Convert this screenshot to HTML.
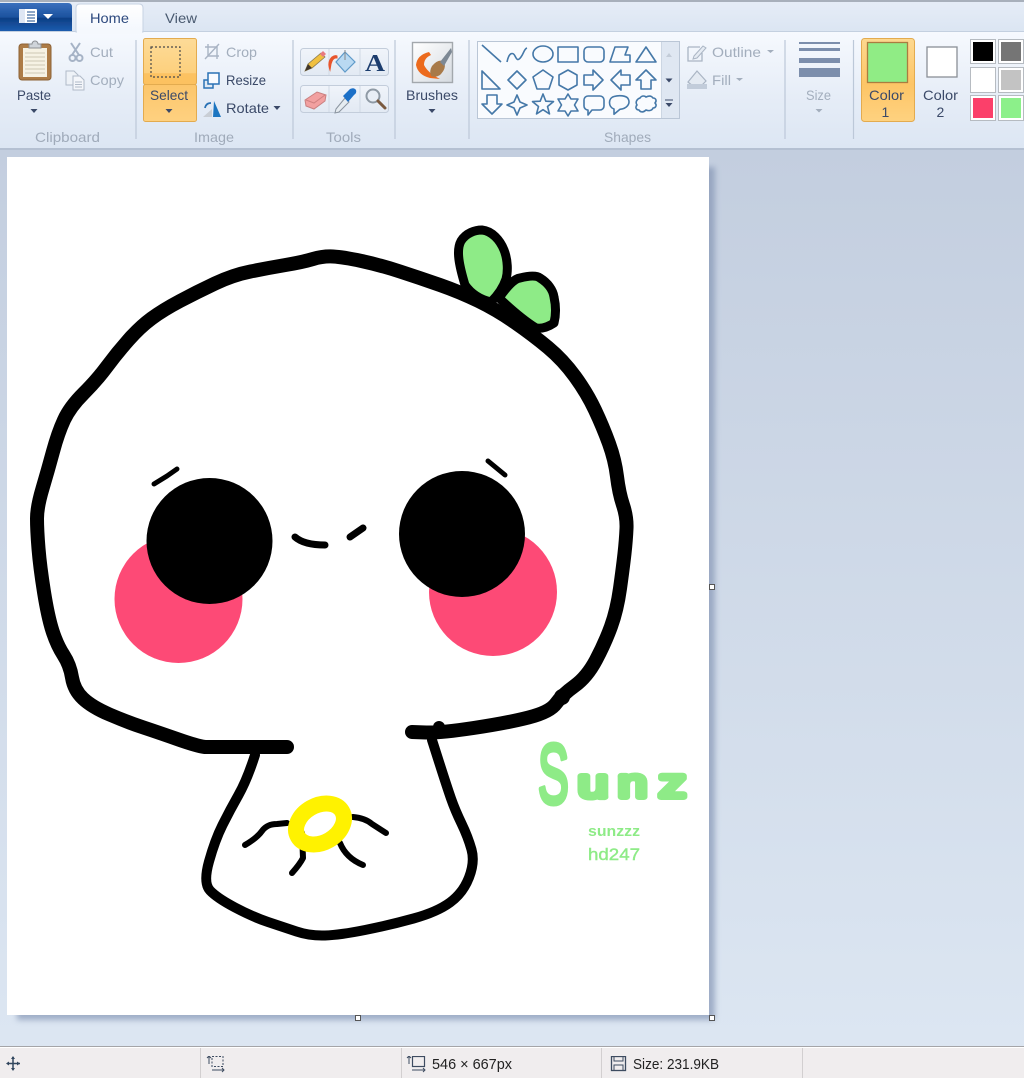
<!DOCTYPE html>
<html><head><meta charset="utf-8"><title>Paint</title>
<style>
html,body{margin:0;padding:0;width:1024px;height:1078px;overflow:hidden;background:#dce6f2}
svg{display:block}
text{font-family:"Liberation Sans",sans-serif}
.d{font-size:14px;fill:#3a4a68}
.g{font-size:14px;fill:#a3aebd}
.l{font-size:14px;fill:#a0abba}
.s{font-size:15px;fill:#222}
.sh{fill:none;stroke:#4478a8;stroke-width:1.6;stroke-linejoin:round}
</style></head><body>
<svg width="1024" height="1078" viewBox="0 0 1024 1078" xmlns="http://www.w3.org/2000/svg">
<defs>
<linearGradient id="bg" x1="0" y1="0" x2="0" y2="1"><stop offset="0" stop-color="#c3cedf"/><stop offset="1" stop-color="#dce6f2"/></linearGradient>
<linearGradient id="rib" x1="0" y1="0" x2="0" y2="1"><stop offset="0" stop-color="#f6f9fe"/><stop offset=".55" stop-color="#e6edf7"/><stop offset="1" stop-color="#dce6f3"/></linearGradient>
<linearGradient id="tab" x1="0" y1="0" x2="0" y2="1"><stop offset="0" stop-color="#e6edf7"/><stop offset="1" stop-color="#dbe5f2"/></linearGradient>
<linearGradient id="home" x1="0" y1="0" x2="0" y2="1"><stop offset="0" stop-color="#ffffff"/><stop offset="1" stop-color="#f3f7fd"/></linearGradient>
<linearGradient id="app" x1="0" y1="0" x2="0" y2="1"><stop offset="0" stop-color="#3a70bd"/><stop offset=".5" stop-color="#1c529f"/><stop offset=".55" stop-color="#0e3f85"/><stop offset="1" stop-color="#1c5cae"/></linearGradient>
<linearGradient id="or1" x1="0" y1="0" x2="0" y2="1"><stop offset="0" stop-color="#fddb98"/><stop offset=".75" stop-color="#fdd07d"/><stop offset=".76" stop-color="#fcc262"/><stop offset="1" stop-color="#fcc160"/></linearGradient>
<linearGradient id="or2" x1="0" y1="0" x2="0" y2="1"><stop offset="0" stop-color="#fcc66c"/><stop offset="1" stop-color="#fed180"/></linearGradient>
<linearGradient id="or3" x1="0" y1="0" x2="0" y2="1"><stop offset="0" stop-color="#fdd88f"/><stop offset=".55" stop-color="#fdc566"/><stop offset="1" stop-color="#fed280"/></linearGradient>
<linearGradient id="tool" x1="0" y1="0" x2="0" y2="1"><stop offset="0" stop-color="#f0f4fa"/><stop offset="1" stop-color="#e2e9f3"/></linearGradient>
<linearGradient id="brush" x1="0" y1="0" x2="1" y2="1"><stop offset="0" stop-color="#ffffff"/><stop offset="1" stop-color="#d5dae0"/></linearGradient>
<filter id="bl" x="-5%" y="-5%" width="110%" height="110%"><feGaussianBlur stdDeviation="3"/></filter>
<filter id="soft" x="0" y="0" width="100%" height="100%"><feGaussianBlur stdDeviation="0.35"/></filter>
</defs>

<!-- canvas background -->
<rect x="0" y="150" width="1024" height="896" fill="url(#bg)"/>
<rect x="17" y="167" width="698" height="853" fill="#7f90b0" opacity=".65" filter="url(#bl)"/>
<rect x="7" y="157" width="702" height="858" fill="#fff"/>

<!-- drawing -->
<circle cx="178.500" cy="599" r="64" fill="#fd4a76"/>
<circle cx="493" cy="592" r="64" fill="#fd4a76"/>
<circle cx="209.500" cy="541" r="63" fill="#000"/>
<circle cx="462" cy="534" r="63" fill="#000"/>
<g fill="none" stroke="#000" stroke-linecap="round" stroke-linejoin="round">
<path stroke-width="14" d="M287,747L205,747Q197,746 178.500,739.500T143.500,727.500T109.500,714.500T83,698.500T72,677.500T63.500,655T52.500,631T44,592T38.500,548.500T37,518.500T42.500,488.500T53,451.500T64,420T83.500,393.500T107,366.500T128.500,340T151.500,318.500T180,301T215,283.500T250.500,271.500T285.500,265T313,259T333,256.500T361.500,261T400,271.500T440,285T478.500,301T515,322.500T548,347.500T575,376.500T595,410T609,443.500T617,476.500T623,505T626.500,528.500T624.500,553.500T620,588.500T611,626.500T596,660T574.500,686T556,703.500T528.500,717.500T473.500,728T426,732.500L412,732"/>
<path stroke-width="10" d="M255,755Q247,780 238.500,795T222.500,825T209,861.500T210,890.500T235,907.500T268,922T296.500,931.500T325,935.500T365,930T413.500,918.500T450,902.500T469,877.500T471.500,849.500T461.500,823.500T451,798.500T439.500,763.500L432,740"/>
<path stroke-width="6" d="M245,845Q257,838 262,831T277,824L287,823"/>
<path stroke-width="6" d="M353,817Q365,818 372,824L386,833"/>
<path stroke-width="6" d="M302,833L303,858Q300,864 292,873"/>
<path stroke-width="6" d="M340,843Q346,858 363,865"/>
<path stroke-width="5" d="M154,484L167,476 177,469"/>
<path stroke-width="5" d="M488,461L505,475"/>
<path stroke-width="7" d="M295,537Q304,545 325,545"/>
<path stroke-width="7" d="M350,537L363,528"/>
</g>
<circle cx="439" cy="727" r="6" fill="#000"/>
<circle cx="562" cy="697" r="8" fill="#000"/>
<ellipse cx="320" cy="824" rx="25.500" ry="18.500" transform="rotate(-30 320 824)" fill="none" stroke="#fff200" stroke-width="16"/>
<path d="M465,285C459,265 456,250 461,241C466,233 475,230 482,230C492,231 500,240 504,250C508,260 508,272 506,279C503,288 497,296 491,302C482,300 472,295 465,285Z" fill="#8eeb87" stroke="#000" stroke-width="9" stroke-linejoin="round"/>
<path d="M499,298C506,288 513,279 520,278C528,276 536,275 540,278C548,283 553,290 554,297C556,306 556,315 554,323C548,327 542,329 536,328C528,323 518,316 499,298Z" fill="#8eeb87" stroke="#000" stroke-width="9" stroke-linejoin="round"/>
<g fill="#8eeb87" stroke="#8eeb87" stroke-linejoin="round" stroke-linecap="round">
<text transform="translate(538,803) scale(.55,1)" stroke-width="5" style="font-size:84px">S</text>
<text x="578" y="797" style="font-size:40px" stroke-width="6" textLength="30" lengthAdjust="spacingAndGlyphs">u</text>
<text x="618" y="797" style="font-size:40px" stroke-width="6" textLength="29" lengthAdjust="spacingAndGlyphs">n</text>
<text x="659" y="797" style="font-size:40px" stroke-width="6" textLength="27" lengthAdjust="spacingAndGlyphs">z</text>
</g>
<text x="588" y="836" textLength="52" lengthAdjust="spacingAndGlyphs" style="font-size:15px;font-weight:bold" fill="#8eeb87">sunzzz</text>
<text x="588" y="860" textLength="52" lengthAdjust="spacingAndGlyphs" style="font-size:17px" fill="#8eeb87" stroke="#8eeb87" stroke-width=".4">hd247</text>

<!-- handles -->
<g fill="#fff" stroke="#555" stroke-width="1">
<rect x="709.500" y="584.500" width="5" height="5"/>
<rect x="355.500" y="1015.500" width="5" height="5"/>
<rect x="709.500" y="1015.500" width="5" height="5"/>
</g>

<!-- ribbon -->
<g filter="url(#soft)">
<rect x="0" y="0" width="1024" height="32" fill="url(#tab)"/>
<rect x="0" y="0" width="1024" height="2" fill="#a8b0bb"/>
<rect x="0" y="32" width="1024" height="116" fill="url(#rib)"/>
<rect x="0" y="148" width="1024" height="2" fill="#b4c0d2"/>
<line x1="0" y1="31.500" x2="1024" y2="31.500" stroke="#c4d0e0"/>
<path d="M0,3H68Q72,3 72,7V31H0Z" fill="url(#app)"/>
<rect x="19" y="9" width="18" height="14" fill="#fff" rx="1"/>
<rect x="19" y="9" width="6" height="14" fill="#dfe7f4"/>
<path d="M27,12h8M27,15h8M27,18h8M27,21h8" stroke="#1f4f8f" stroke-width="1"/>
<path d="M43,14h10l-5,5z" fill="#fff"/>
<path d="M76,32V8Q76,4 80,4H139Q143,4 143,8V32Z" fill="url(#home)" stroke="#c7d3e3"/>
<rect x="77" y="30" width="65" height="4" fill="#f5f8fd"/>
<text x="90" y="23" textLength="39" lengthAdjust="spacingAndGlyphs" style="font-size:14px" fill="#2d4a7e">Home</text>
<text x="165" y="23" textLength="32" lengthAdjust="spacingAndGlyphs" style="font-size:14px" fill="#4a5a70">View</text>

<!-- separators -->
<g stroke="#bcc8d8" stroke-width="1.200">
<line x1="136" y1="40" x2="136" y2="139"/><line x1="293" y1="40" x2="293" y2="139"/>
<line x1="395" y1="40" x2="395" y2="139"/><line x1="469" y1="40" x2="469" y2="139"/>
<line x1="785" y1="40" x2="785" y2="139"/><line x1="853.500" y1="40" x2="853.500" y2="139"/>
</g>

<!-- clipboard -->
<rect x="19" y="44" width="32" height="36" rx="3" fill="#ad7b47" stroke="#8d6236"/>
<rect x="23" y="48" width="24" height="29" fill="#f6f2e4"/>
<path d="M25,53h20M25,57h20M25,61h20M25,65h20M25,69h20M25,73h20" stroke="#cfc8b4" stroke-width="1"/>
<path d="M29,48V44h3a3,3 0 0 1 6,0h3v4z" fill="#cfd4da" stroke="#8c8f93"/>
<text x="17" y="100" textLength="34" lengthAdjust="spacingAndGlyphs" class="d">Paste</text>
<path d="M30.500,109h7l-3.500,4z" fill="#3a4a68"/>
<g stroke="#a6b3c6" fill="none" stroke-width="2"><path d="M71,43L79,55M80,43L72,55"/><circle cx="72.500" cy="58" r="3"/><circle cx="79.500" cy="58" r="3"/></g>
<g fill="#eef2f7" stroke="#b0bac8"><path d="M66,71h8l4,4v10H66z"/><path d="M73,76h7l4,4v10H73z" fill="#f4f6fa"/></g>
<path d="M75,82h7M75,84.500h7M75,87h7" stroke="#b0bac8"/>
<text x="90" y="57" textLength="23" lengthAdjust="spacingAndGlyphs" class="g">Cut</text>
<text x="90" y="85" textLength="34" lengthAdjust="spacingAndGlyphs" class="g">Copy</text>
<text x="35" y="142" textLength="65" lengthAdjust="spacingAndGlyphs" class="l">Clipboard</text>

<!-- select -->
<rect x="143.500" y="38.500" width="53" height="46" rx="2" fill="url(#or1)" stroke="#e3ab50"/>
<rect x="143.500" y="84.500" width="53" height="37" rx="2" fill="url(#or2)" stroke="#e3ab50"/>
<rect x="151" y="47" width="29" height="30" fill="none" stroke="#4a4a4a" stroke-width="1.200" stroke-dasharray="2 2"/>
<text x="150" y="100" textLength="38" lengthAdjust="spacingAndGlyphs" class="d">Select</text>
<path d="M165.500,109h7l-3.500,4z" fill="#3a4a68"/>

<!-- image -->
<g fill="none" stroke="#a9b4c4" stroke-width="1.400"><path d="M208,44v12h11M205,47h12v12"/><path d="M205,59L219,44"/></g>
<g fill="#fff" stroke="#2a72b5" stroke-width="1.500"><rect x="204" y="80" width="9" height="8" fill="#dfe8f3"/><rect x="208" y="73" width="11" height="11" fill="#f8fbff"/></g>
<path d="M214,101l7,16h-8z" fill="#1f74c0"/><path d="M203,117l9,-8v8z" fill="#c9ced5"/>
<path d="M205,108q1,-5 6,-5" fill="none" stroke="#2a72b5" stroke-width="1.800"/>
<text x="226" y="57" textLength="31" lengthAdjust="spacingAndGlyphs" class="g">Crop</text>
<text x="226" y="85" textLength="40" lengthAdjust="spacingAndGlyphs" class="d">Resize</text>
<text x="226" y="113" textLength="43" lengthAdjust="spacingAndGlyphs" class="d">Rotate</text>
<path d="M273.500,106h7l-3.500,4z" fill="#3a4a68"/>
<text x="194" y="142" textLength="40" lengthAdjust="spacingAndGlyphs" class="l">Image</text>

<!-- tools -->
<rect x="300.500" y="48.500" width="88" height="27" rx="3" fill="url(#tool)" stroke="#c3cddb"/>
<rect x="300.500" y="85.500" width="88" height="27" rx="3" fill="url(#tool)" stroke="#c3cddb"/>
<path d="M329,49v26M360,49v26M329,86v26M360,86v26" stroke="#d0d9e5"/>
<path d="M305,71l3,-7 13,-11 4,4 -13,11z" fill="#f0c040" stroke="#8a7a50" stroke-width=".8"/>
<path d="M320,54l3,-3 3,3 -3,3z" fill="#e87a80"/><path d="M305,71l3,-7 4,4z" fill="#40362c"/>
<path d="M345,52l10,10 -10,10 -9,-10z" fill="#b9d9f2" stroke="#5f9ac9" stroke-width="1.200"/>
<path d="M345,50l0,10" stroke="#888" stroke-width="1"/>
<path d="M337,58q-4,-1 -6,6l-1,6q-3,-8 2,-13q3,-2 5,-1z" fill="#e8552d" stroke="#e8552d"/>
<text x="365" y="71" textLength="20" lengthAdjust="spacingAndGlyphs" style="font-family:'Liberation Serif',serif;font-size:24px;font-weight:bold" fill="#1f3d6e">A</text>
<path d="M305,100l12,-8 9,3 -1,6 -11,8 -8,-3z" fill="#f2a0a0" stroke="#c98080"/>
<path d="M306,100l8,3 11,-8" fill="none" stroke="#d08080"/>
<path d="M336,109l9,-11 4,4 -10,10 -4,1z" fill="#e6ecf1" stroke="#8b95a0"/>
<path d="M343,96l7,-7q4,-2 6,1q1,3 -2,5l-6,7z" fill="#1f6fc7"/>
<circle cx="373" cy="96" r="6.500" fill="#e8eef6" stroke="#8f9aa5" stroke-width="2"/>
<path d="M378,101l7,7" stroke="#7a5a3f" stroke-width="3" stroke-linecap="round"/>
<text x="326" y="142" textLength="35" lengthAdjust="spacingAndGlyphs" class="l">Tools</text>

<!-- brushes -->
<rect x="412.500" y="42.500" width="40" height="40" fill="url(#brush)" stroke="#a3a8ad" stroke-width="1.400"/>
<path d="M429,52q-12,3 -13,13q2,10 14,13l10,1q-12,-6 -16,-14q0,-7 7,-10z" fill="#ec6a1f"/>
<path d="M432,66q7,-8 12,-4q3,6 -4,13q-5,3 -9,1q-2,-5 1,-10z" fill="#a87a4a"/>
<path d="M440,62l11,-14 1,4 -8,14z" fill="#7d8894"/>
<text x="406" y="100" textLength="52" lengthAdjust="spacingAndGlyphs" class="d">Brushes</text>
<path d="M428.500,109h7l-3.500,4z" fill="#3a4a68"/>

<!-- shapes gallery -->
<rect x="477.500" y="41.500" width="202" height="77" fill="#f9fbfe" stroke="#bac6d6"/>
<rect x="661" y="42" width="18" height="76" fill="#dfe7f2"/>
<line x1="661.500" y1="42" x2="661.500" y2="118" stroke="#ccd6e3"/>
<path d="M666,57h6l-3,-4z" fill="#c3ccd8"/><path d="M665.500,78.500h7l-3.500,4z" fill="#3a4a68"/>
<path d="M665,100h8" stroke="#3a4a68"/><path d="M665.500,103h7l-3.500,4z" fill="#3a4a68"/>
<g class="sh">
<path class="sh" d="M482,45L501,62"/>
<path class="sh" d="M507,62c2,-10 6,-10 8,-6s3,5 6,1 3,-8 6,-9"/>
<ellipse class="sh" cx="543" cy="54" rx="10" ry="8"/>
<rect class="sh" x="558" y="47" width="20" height="15"/>
<rect class="sh" x="584" y="47" width="20" height="15" rx="4"/>
<path class="sh" d="M610,62L615,47H628L625,55H630V62Z"/>
<path class="sh" d="M646,47L656,62H636Z"/>
<path class="sh" d="M482,71V89H500Z"/>
<path class="sh" d="M517,71L526,80 517,89 508,80Z"/>
<path class="sh" d="M543,70L553,77 549,89 537,89 533,77Z"/>
<path class="sh" d="M568,70L577,75V85L568,90 559,85V75Z"/>
<path class="sh" d="M584,75h9v-5l10,10 -10,10v-5h-9z"/>
<path class="sh" d="M630,75h-9v-5l-10,10 10,10v-5h9z"/>
<path class="sh" d="M646,70l10,10h-5v9h-10v-9h-5z"/>
<path class="sh" d="M487,95h10v9h5l-10,10 -10,-10h5z"/>
<path class="sh" d="M517,95l3,7 7,3 -7,3 -3,7 -3,-7 -7,-3 7,-3z"/>
<path class="sh" d="M543,94L545.800,101.200 553.500,101.600 547.500,106.500 549.500,113.900 543,109.700 536.500,113.900 538.500,106.500 532.500,101.600 540.200,101.200Z"/>
<path class="sh" d="M568,94L571,99H578L574.500,105 578,111H571L568,116 565,111H558L561.500,105 558,99H565Z"/>
<path class="sh" d="M588,96h12a4,4 0 0 1 4,4v6a4,4 0 0 1 -4,4h-8l-4,5v-5a4,4 0 0 1 -4,-4v-6a4,4 0 0 1 4,-4z"/>
<path class="sh" d="M614,109c-6,-2 -6,-11 0,-12.500 5,-1.500 12,-1 14,2 3,5 -1,10 -8,10.800l-6,5z"/>
<path class="sh" d="M640,98c2,-3 5,-2 6,-1 2,-1 5,-2 7,1 3,0 4,3 2,5 2,2 1,5 -2,5 -1,3 -5,3 -7,2 -3,3 -6,2 -7,0 -3,0 -4,-3 -2,-5 -2,-3 0,-6 3,-7z"/>
</g>
<text x="604" y="142" textLength="47" lengthAdjust="spacingAndGlyphs" class="l">Shapes</text>

<!-- outline/fill -->
<path d="M688,47h12M688,47v14h14v-8" fill="none" stroke="#aab5c4" stroke-width="1.300"/>
<path d="M694,56l9,-10 3,2 -9,10 -4,1z" fill="#e5ebf3" stroke="#aab5c4"/>
<text x="712" y="57" textLength="49" lengthAdjust="spacingAndGlyphs" class="g">Outline</text>
<path d="M767,50h7l-3.500,3z" fill="#a3aebd"/>
<path d="M688,82l9,-11 9,10 -6,6h-6z" fill="#e4eaf2" stroke="#aab5c4" stroke-width="1.200"/>
<rect x="687" y="84" width="20" height="5" fill="#c2ccda"/>
<text x="712" y="85" textLength="19" lengthAdjust="spacingAndGlyphs" class="g">Fill</text>
<path d="M736,78h7l-3.500,3z" fill="#a3aebd"/>

<!-- size -->
<g fill="#7c8eac"><rect x="799" y="42" width="41" height="2"/><rect x="799" y="48" width="41" height="3"/><rect x="799" y="58" width="41" height="5"/><rect x="799" y="68" width="41" height="9"/></g>
<text x="806" y="100" textLength="25" lengthAdjust="spacingAndGlyphs" class="g">Size</text>
<path d="M815.500,109h7l-3.500,3.500z" fill="#a3aebd"/>

<!-- colors -->
<rect x="861.500" y="38.500" width="53" height="83" rx="3" fill="url(#or3)" stroke="#e3ab50"/>
<rect x="867.500" y="42.500" width="40" height="40" fill="#90ec85" stroke="#ab7c3f" stroke-width="1.300"/>
<text x="869" y="100" textLength="35" lengthAdjust="spacingAndGlyphs" class="d">Color</text>
<text x="881.500" y="117" class="d">1</text>
<rect x="927" y="47" width="30" height="30" fill="#fff" stroke="#8a8f96" stroke-width="1.300"/>
<text x="923" y="100" textLength="35" lengthAdjust="spacingAndGlyphs" class="d">Color</text>
<text x="936.500" y="117" class="d">2</text>
<g stroke="#b6bbc1" fill="#fff">
<rect x="970.500" y="39.500" width="25" height="24"/><rect x="998.500" y="39.500" width="25" height="24"/>
<rect x="970.500" y="67.500" width="25" height="25"/><rect x="998.500" y="67.500" width="25" height="25"/>
<rect x="970.500" y="95.500" width="25" height="25"/><rect x="998.500" y="95.500" width="25" height="25"/>
</g>
<rect x="973" y="42" width="20" height="19" fill="#000"/><rect x="1001" y="42" width="20" height="19" fill="#757575"/>
<rect x="973" y="70" width="20" height="20" fill="#fff"/><rect x="1001" y="70" width="20" height="20" fill="#c3c3c3"/>
<rect x="973" y="98" width="20" height="20" fill="#fb3f6b"/><rect x="1001" y="98" width="20" height="20" fill="#8cf08a"/>
</g>

<!-- status bar -->
<rect x="0" y="1046" width="1024" height="32" fill="#f0edee"/>
<line x1="0" y1="1046.500" x2="1024" y2="1046.500" stroke="#a5a5a8"/>
<line x1="0" y1="1047.500" x2="1024" y2="1047.500" stroke="#fff"/>
<g stroke="#d2cfd0"><line x1="200.500" y1="1048" x2="200.500" y2="1078"/><line x1="401.500" y1="1048" x2="401.500" y2="1078"/><line x1="601.500" y1="1048" x2="601.500" y2="1078"/><line x1="802.500" y1="1048" x2="802.500" y2="1078"/></g>
<g filter="url(#soft)">
<path d="M13,1057v13M7,1063.500h13" stroke="#33475f" stroke-width="1.500"/>
<path d="M11,1059h4l-2,-3zM11,1068h4l-2,3zM9,1061.500v4l-3,-2zM17,1061.500v4l3,-2z" fill="#33475f"/>
<rect x="212" y="1056.500" width="11" height="10" fill="none" stroke="#3d4c60" stroke-dasharray="2 1.500"/>
<path d="M209,1056v8M207,1058l2,-2 2,2M212,1070h12M222,1068l2,2 -2,2" fill="none" stroke="#3d4c60"/>
<rect x="412.500" y="1056.500" width="12" height="10" fill="none" stroke="#3d4c60" stroke-width="1.200"/>
<path d="M409,1056v8M407,1058l2,-2 2,2M412,1070h13M423,1068l2,2 -2,2" fill="none" stroke="#3d4c60"/>
<rect x="611.500" y="1056.500" width="14" height="14" fill="none" stroke="#3d4c60" stroke-width="1.300"/>
<path d="M614,1057v4h9v-4M614,1070v-5h9v5" fill="none" stroke="#3d4c60"/>
<text x="432" y="1069" textLength="80" lengthAdjust="spacingAndGlyphs" class="s">546 × 667px</text>
<text x="633" y="1069" textLength="86" lengthAdjust="spacingAndGlyphs" class="s">Size: 231.9KB</text>
</g>
</svg>
</body></html>
